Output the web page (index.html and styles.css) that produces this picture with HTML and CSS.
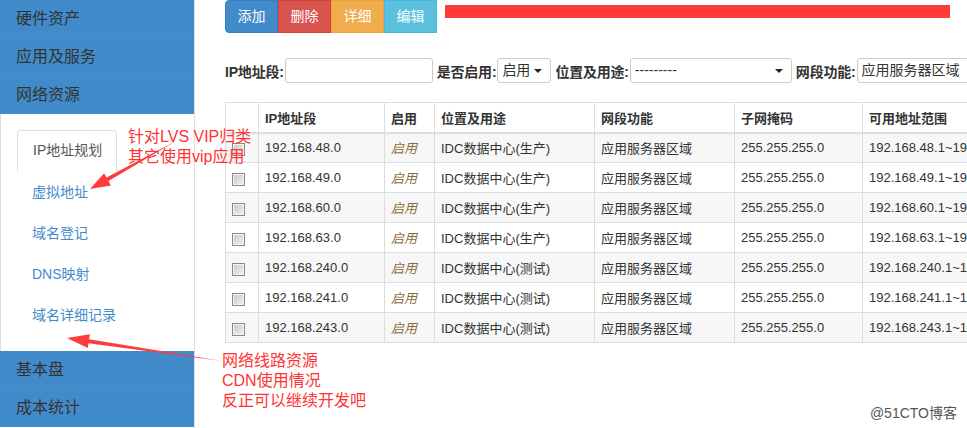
FILE: index.html
```html
<!DOCTYPE html>
<html lang="zh-CN">
<head>
<meta charset="utf-8">
<title>IP地址规划</title>
<link rel="stylesheet" href="styles.css">
</head>
<body>
<div class="page">
  <aside class="sidebar">
    <div class="panel-heading">硬件资产</div>
    <div class="panel-heading">应用及服务</div>
    <div class="panel-heading">网络资源</div>
    <div class="panel-body">
      <ul class="nav">
        <li class="nav-item active"><a>IP地址规划</a></li>
        <li class="nav-item"><a>虚拟地址</a></li>
        <li class="nav-item"><a>域名登记</a></li>
        <li class="nav-item"><a>DNS映射</a></li>
        <li class="nav-item"><a>域名详细记录</a></li>
      </ul>
    </div>
    <div class="panel-heading">基本盘</div>
    <div class="panel-heading">成本统计</div>
  </aside>
  <main class="main">
    <div class="toolbar">
      <span class="btn btn-primary">添加</span>
      <span class="btn btn-danger">删除</span>
      <span class="btn btn-warning">详细</span>
      <span class="btn btn-info">编辑</span>
    </div>
    <div class="filters">
      <label class="flabel">IP地址段:</label>
      <span class="finput w-ip"></span>
      <label class="flabel">是否启用:</label>
      <span class="fselect w-en">启用<i class="caret"></i></span>
      <label class="flabel">位置及用途:</label>
      <span class="fselect w-loc">---------<i class="caret"></i></span>
      <label class="flabel">网段功能:</label>
      <span class="finput w-fn">应用服务器区域</span>
    </div>
    <table class="grid">
      <colgroup>
        <col class="c-cb"><col class="c-ip"><col class="c-en"><col class="c-loc"><col class="c-fn"><col class="c-mask"><col class="c-range">
      </colgroup>
      <thead>
        <tr><th></th><th>IP地址段</th><th>启用</th><th>位置及用途</th><th>网段功能</th><th>子网掩码</th><th>可用地址范围</th></tr>
      </thead>
      <tbody>
        <tr><td><span class="cb"></span></td><td>192.168.48.0</td><td class="en">启用</td><td>IDC数据中心(生产)</td><td>应用服务器区域</td><td>255.255.255.0</td><td>192.168.48.1~192.168.48.254</td></tr>
        <tr><td><span class="cb"></span></td><td>192.168.49.0</td><td class="en">启用</td><td>IDC数据中心(生产)</td><td>应用服务器区域</td><td>255.255.255.0</td><td>192.168.49.1~192.168.49.254</td></tr>
        <tr><td><span class="cb"></span></td><td>192.168.60.0</td><td class="en">启用</td><td>IDC数据中心(生产)</td><td>应用服务器区域</td><td>255.255.255.0</td><td>192.168.60.1~192.168.60.254</td></tr>
        <tr><td><span class="cb"></span></td><td>192.168.63.0</td><td class="en">启用</td><td>IDC数据中心(生产)</td><td>应用服务器区域</td><td>255.255.255.0</td><td>192.168.63.1~192.168.63.254</td></tr>
        <tr><td><span class="cb"></span></td><td>192.168.240.0</td><td class="en">启用</td><td>IDC数据中心(测试)</td><td>应用服务器区域</td><td>255.255.255.0</td><td>192.168.240.1~192.168.240.254</td></tr>
        <tr><td><span class="cb"></span></td><td>192.168.241.0</td><td class="en">启用</td><td>IDC数据中心(测试)</td><td>应用服务器区域</td><td>255.255.255.0</td><td>192.168.241.1~192.168.241.254</td></tr>
        <tr><td><span class="cb"></span></td><td>192.168.243.0</td><td class="en">启用</td><td>IDC数据中心(测试)</td><td>应用服务器区域</td><td>255.255.255.0</td><td>192.168.243.1~192.168.243.254</td></tr>
      </tbody>
    </table>
  </main>
</div>

<div class="redbar"></div>
<div class="note note-top">针对LVS VIP归类<br>其它使用vip应用</div>
<div class="note note-bottom">网络线路资源<br>CDN使用情况<br>反正可以继续开发吧</div>
<svg class="arrows" width="967" height="428" viewBox="0 0 967 428">
  <polygon points="176,141 108.5,181.1 110.9,185.4 90,189 104.1,173.2 106.5,177.5" fill="#ff3b3b"/>
  <polygon points="222,361 89.1,339.2 89.8,334.3 67,338 87.8,348.1 88.5,343.2" fill="#ff3b3b"/>
</svg>
<div class="watermark">@51CTO博客</div>
</body>
</html>
```

FILE: styles.css
```css
* { box-sizing: border-box; }
html, body { margin: 0; padding: 0; }
body {
  width: 967px;
  height: 428px;
  overflow: hidden;
  position: relative;
  background: #fff;
  font-family: "Liberation Sans", "Noto Sans CJK SC", sans-serif;
  color: #333;
}
.page { display: flex; height: 428px; }

.sidebar {
  width: 195px;
  flex-shrink: 0;
  border-right: 1px solid #ddd;
}
.panel-heading {
  height: 38px;
  line-height: 38px;
  padding: 0 16px;
  background: #428bca;
  color: #333;
  font-size: 16px;
  border-bottom: 1px solid #4a90cc;
}
.panel-body {
  height: 237px;
  padding: 16px 0 0 16px;
  border-left: 1px solid #ddd;
}
.nav { list-style: none; margin: 0; padding: 0; }
.nav-item a {
  display: block;
  padding: 10px 15px;
  line-height: 21px;
  font-size: 14px;
  color: #428bca;
  white-space: nowrap;
}
.nav-item.active a {
  width: 100px;
  color: #555;
  border: 1px solid #ddd;
  border-bottom-color: transparent;
  border-radius: 4px 4px 0 0;
  padding: 9px 0 10px 15px;
}

.main {
  flex: 1;
  min-width: 0;
  overflow: hidden;
  padding-left: 30px;
}
.toolbar { display: flex; align-items: flex-start; height: 33px; }
.btn {
  width: 53px;
  height: 33px;
  line-height: 31px;
  text-align: center;
  font-size: 14px;
  color: #fff;
  border: 1px solid;
}
.btn-primary { background: #428bca; border-color: #357ebd; border-radius: 4px 0 0 4px; }
.btn-danger { background: #d9534f; border-color: #d43f3a; }
.btn-warning { background: #f0ad4e; border-color: #eea236; }
.btn-info { background: #5bc0de; border-color: #46b8da; }

.filters {
  display: flex;
  align-items: center;
  margin-top: 25px;
  height: 25px;
  white-space: nowrap;
}
.flabel {
  font-size: 14px;
  font-weight: bold;
  color: #333;
  margin-right: 1px;
  letter-spacing: -0.2px;
}
.finput, .fselect {
  height: 25px;
  border: 1px solid #ccc;
  border-radius: 3px;
  font-size: 14px;
  line-height: 23px;
  padding: 0 4px;
  color: #333;
  margin-right: 4px;
  flex-shrink: 0;
  position: relative;
}
.w-ip { width: 148px; }
.w-en { width: 54px; }
.w-loc { width: 162px; }
.w-fn { width: 140px; }
.caret {
  position: absolute;
  right: 8px;
  top: 10px;
  border-left: 4px solid transparent;
  border-right: 4px solid transparent;
  border-top: 4px solid #222;
}

.grid {
  margin-top: 19px;
  width: 900px;
  table-layout: fixed;
  border-collapse: collapse;
  font-size: 13px;
}
.c-cb { width: 33px; }
.c-ip { width: 126px; }
.c-en { width: 50px; }
.c-loc { width: 160px; }
.c-fn { width: 140px; }
.c-mask { width: 128px; }
.c-range { width: 263px; }
.grid th, .grid td {
  border: 1px solid #ddd;
  padding: 0 6px;
  height: 30px;
  text-align: left;
  white-space: nowrap;
  overflow: hidden;
}
.grid th {
  font-weight: bold;
  color: #333;
  border-bottom: 2px solid #ddd;
}
.grid tbody tr:nth-child(odd) { background: #f7f7f7; }
.grid td.en { font-style: italic; color: #8a6d3b; }
.cb {
  display: inline-block;
  width: 13px;
  height: 13px;
  margin-top: 6px;
  border: 1px solid #8a8a8a;
  box-shadow: inset 0 0 0 1px #f4f4f4;
  background: linear-gradient(135deg, #c8c8c8, #f2f2f2);
}

.redbar {
  position: absolute;
  left: 445px;
  top: 5px;
  width: 505px;
  height: 13px;
  background: #fd3b3b;
}
.note {
  position: absolute;
  color: #ff3333;
  font-size: 16px;
  line-height: 20px;
  white-space: nowrap;
}
.note-top { left: 128px; top: 127px; }
.note-bottom { left: 222px; top: 351px; }
.arrows { position: absolute; left: 0; top: 0; pointer-events: none; }
.watermark {
  position: absolute;
  right: 10px;
  top: 402px;
  font-size: 14px;
  color: #555;
}
```
